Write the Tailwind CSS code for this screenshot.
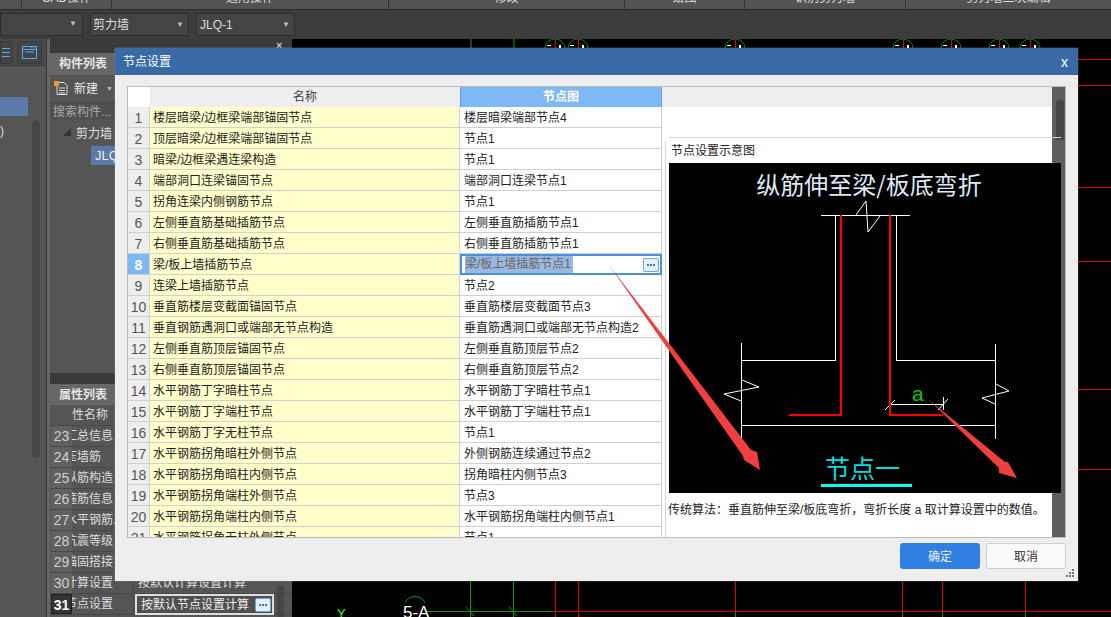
<!DOCTYPE html>
<html lang="zh-CN">
<head>
<meta charset="utf-8">
<title>节点设置</title>
<script src="https://cdn.jsdelivr.net/npm/@tailwindcss/browser@4"></script>
</head>
<body class="bg-black font-['Liberation_Sans','Noto_Sans_CJK_SC',sans-serif] text-xs">
<div class="relative w-[1111px] h-[617px] overflow-hidden flex flex-col">

  <!-- ribbon group labels -->
  <div class="h-[10px] shrink-0 flex bg-[#535353] border-b border-[#2b2b2b] text-[#ddd] overflow-hidden">
    <div class="w-[22px] border-r border-[#333]"></div>
    <div class="w-[90px] border-r border-[#333] text-center -mt-[10px]">CAD操作</div>
    <div class="w-[277px] border-r border-[#333] text-center -mt-[10px]">通用操作</div>
    <div class="w-[236px] border-r border-[#333] text-center -mt-[10px]">修改</div>
    <div class="w-[120px] border-r border-[#333] text-center -mt-[10px]">绘图</div>
    <div class="w-[161px] border-r border-[#333] text-center -mt-[10px]">识别剪力墙</div>
    <div class="flex-1 text-center -mt-[10px]">剪力墙二次编辑</div>
  </div>

  <!-- selector bar -->
  <div class="h-[29px] shrink-0 bg-[#3c3c3c] flex items-start gap-[7px] pt-[3px]">
    <div class="w-[83px] h-[23px] bg-[#444] border border-[#2e2e2e] flex items-center justify-end pr-[5px]"><span class="text-[#bbb] text-[8px]">▼</span></div>
    <div class="w-[99px] h-[23px] bg-[#444] border border-[#2e2e2e] flex items-center justify-between pl-[2px] pr-[4px] pt-[1px] text-[#ddd]"><span>剪力墙</span><span class="text-[#bbb] text-[8px]">▼</span></div>
    <div class="w-[99px] h-[23px] bg-[#444] border border-[#2e2e2e] flex items-center justify-between pl-[3px] pr-[4px] pt-[1px] text-[#ddd]"><span>JLQ-1</span><span class="text-[#bbb] text-[8px]">▼</span></div>
  </div>

  <div class="flex-1 flex min-h-0">
    <!-- left rail -->
    <div class="w-[46px] shrink-0 bg-[#555] flex flex-col">
      <div class="h-[27px] bg-[#4a4a4a] border-b border-[#3c3c3c] flex items-center justify-between pr-[4px]">
        <div class="w-[13px] h-[23px] bg-[#444] rounded-r-[3px] border border-[#3a3a3a] flex flex-col justify-center gap-[3px] pl-[1px]">
          <span class="block w-[8px] h-px bg-[#5aa7f0]"></span><span class="block w-[8px] h-px bg-[#5aa7f0]"></span><span class="block w-[8px] h-px bg-[#5aa7f0]"></span>
        </div>
        <div class="w-[25px] h-[23px] bg-[#444] rounded-[3px] border border-[#3a3a3a] flex items-center justify-center">
          <svg width="15" height="13" viewBox="0 0 15 13" fill="none" stroke="#5aa7f0"><rect x=".5" y=".5" width="14" height="12"/><path d="M.5 3.500h14M3 6h9M9 1.800h1M11 1.800h1"/></svg>
        </div>
      </div>
      <div class="relative flex-1">
        <div class="mt-[31px] w-[28px] h-[19px] bg-[#5a7aa8]"></div>
        <div class="text-[#ddd] mt-[7px] h-[16px] leading-[16px]">)</div>
        <div class="absolute left-[32px] top-[54px] w-[8px] h-[337px] rounded-[4px] bg-[#464646]"></div>
      </div>
    </div>
    <div class="w-[4px] shrink-0 bg-[#666] border-l border-[#3a3a3a]"></div>

    <!-- component + property panels -->
    <div class="w-[242px] shrink-0 flex flex-col bg-[#555]">
      <div class="h-[14px] bg-[#3a3a3a] flex justify-end items-center pr-[10px] text-[#ccc] text-[10px] font-bold">×</div>
      <div class="h-[22px] bg-[#666] text-[#e4e4e4] font-bold pl-[9px] leading-[22px]">构件列表</div>
      <div class="h-[28px] flex items-center pl-[4px] text-[#e8e8e8] border-b border-[#484848]">
        <svg width="15" height="15" viewBox="0 0 15 15" fill="none" class="mr-[5px]"><path d="M3 1.500h7l3 3v9H3z" stroke="#ddd"/><path d="M5 7h6M5 9.500h6M5 12h6" stroke="#ddd"/><rect x="0" y="0" width="5" height="5" fill="#e89a3c"/></svg>
        <span>新建</span><span class="text-[#bbb] text-[7px] ml-[8px]">▼</span>
      </div>
      <div class="h-[17px] bg-[#505050] text-[#a8a8a8] pl-[3px] leading-[19px]">搜索构件...</div>
      <div class="h-[26px] flex items-center pl-[13px] pt-[1px] text-[#e0e0e0]"><span class="text-[#333] text-[8px] mr-[5px]">◢</span>剪力墙</div>
      <div class="ml-[41px] w-[60px] h-[19px] bg-[#5a7aa8] text-[#eee] pl-[4px] leading-[19px] text-[13px]">JLQ-1</div>
      <div class="h-[208px]"></div>
      <div class="h-[11px] bg-[#3a3a3a]"></div>
      <div class="h-[21px] bg-[#666] text-[#e4e4e4] font-bold pl-[9px] leading-[22px]">属性列表</div>
      <div id="props" class="flex-1 relative"></div>
    </div>
    <div class="flex-1 min-w-0">
      <svg class="block w-full h-full" viewBox="292 39 819 578" fill="none">
        <path d="M471 39v9" stroke="#666"/>
        <path d="M514 39v9" stroke="#0a0"/>
        <g id="bubbles"></g>
        <path d="M1078 59.500h33M1078 85.500h33M1078 187.500h33M1078 261.500h33M1078 389.500h33M1078 469.500h33" stroke="#d00"/>
        <path d="M735.500 581v31M902.500 581v31M942.500 581v31M1025.500 581v31M555.500 581v36M578.500 581v36" stroke="#d00"/>
        <path d="M735.500 612v5M902.500 612v5M942.500 612v5M1025.500 612v5M470.500 581v36M513.500 581v36" stroke="#090"/>
        <path d="M427 611.500h128" stroke="#090"/>
        <path d="M555 611.500h556" stroke="#d00"/>
        <path d="M466 607l8 9M509 607l8 9" stroke="#090"/>
        <path d="M405 603a11 11 0 0 1 20 0" stroke="#090"/>
        <text x="403" y="618" fill="#fff" font-size="17" font-family="Liberation Sans">5-A</text>
        <text x="337" y="618" fill="#3f3" font-size="13" font-family="Liberation Sans">Y</text>
      </svg>
    </div>
  </div>

  <!-- 节点设置 dialog -->
  <div class="absolute left-[115px] top-[48px] w-[963px] h-[533px] bg-[#eee] flex flex-col shadow-[0_0_1px_#aab]">
    <div class="h-[27px] shrink-0 bg-[#3a6aa5] text-white flex items-center justify-between pl-[8px] pr-[10px]">
      <span>节点设置</span><span class="text-sm leading-none">x</span>
    </div>
    <div class="flex-1 min-h-0 flex flex-col pl-[12px] pr-[12px] pt-[11px]">
      <div class="relative h-[452px] border border-[#bbb] flex bg-white overflow-hidden">
        <div class="w-[534px] shrink-0 overflow-hidden">
          <div class="flex h-[20px]">
            <div class="w-[22px] bg-white"></div>
            <div class="w-[310px] bg-[#eee] text-[#444] text-center leading-[21px]">名称</div>
            <div class="w-[202px] bg-[#7fb8f7] text-white font-bold text-center leading-[21px] border-x border-[#5f9fe6]">节点图</div>
          </div>
          <div id="rows"></div>
        </div>
        <div class="flex-1 flex flex-col">
          <div class="h-[20px] bg-[#eee]"></div>
          <div class="flex-1"></div>
        </div>
        <div class="w-[13px] shrink-0 bg-[#5e5e5e] relative">
          <div class="absolute left-[4px] top-[13px] w-[8px] h-[40px] rounded-t-[4px] bg-[#454545]"></div>
        </div>

        <!-- schematic sits over the right pane and its scrollbar -->
        <div class="absolute left-[537px] top-[50px] w-[396px] bottom-0 flex flex-col">
          <div class="ml-[4px] h-px bg-[#d4d4d4]"></div>
          <div class="mt-[3px] flex-1 border-l border-[#d4d4d4] pl-[3px] flex flex-col">
            <div class="h-[22px] text-[#222] pl-[2px] leading-[21px]">节点设置示意图</div>
            <svg width="392" height="330" viewBox="669 163 392 330" class="block shrink-0 bg-black" fill="none">
              <text x="869" y="194" text-anchor="middle" fill="#dfe9f5" font-size="24" font-family="Noto Sans CJK SC">纵筋伸至梁/板底弯折</text>
              <g stroke="#fff">
                <path d="M821 215.500h89M835.500 215v145.500M896.500 215v145.500"/>
                <path d="M856 215l10-14 2 31 12-16"/>
                <path d="M741.500 343v96M995.500 344v95M741 360.500h95M896 360.500h100M741 425.500h255"/>
                <path d="M742 380l17 7-35 7 17 7M996 384l13 7-27 7 13 6"/>
                <path d="M890 404.500h53M885 410l10-10M943.500 397v13M938 410l10-11"/>
              </g>
              <path d="M841 215v200h-52M890 215v200h53" stroke="#f00" stroke-width="2"/>
              <text x="912" y="401" fill="#0c0" font-size="21" font-family="Liberation Sans">a</text>
              <text x="825" y="478" fill="#0dd" font-size="25" font-family="Noto Sans CJK SC">节点一</text>
              <path d="M821 485.500h91" stroke="#0ff" stroke-width="3"/>
            </svg>
            <div class="-ml-[1px] h-[43px] pt-[9px] text-[#222] leading-[16px] whitespace-nowrap">传统算法：垂直筋伸至梁/板底弯折，弯折长度 a 取计算设置中的数值。</div>
          </div>
        </div>
      </div>
      <div class="flex justify-end gap-[6px] mt-[5px]">
        <button class="w-[80px] h-[26px] rounded-[3px] bg-[#2f80e2] text-[#e8f0fa] pt-[2px]">确定</button>
        <button class="w-[80px] h-[26px] rounded-[3px] bg-[#fafafa] border border-[#c6cfdf] text-[#333] pt-[2px]">取消</button>
      </div>
    </div>
    <svg class="absolute right-[3px] bottom-[3px]" width="9" height="9" viewBox="0 0 9 9" fill="#777"><path d="M6 0h2v2H6zM3 3h2v2H3zM6 3h2v2H6zM0 6h2v2H0zM3 6h2v2H3zM6 6h2v2H6z"/></svg>
  </div>

  <!-- red annotation arrows drawn on top of the screenshot -->
  <svg class="absolute inset-0 pointer-events-none" width="1111" height="617" viewBox="0 0 1111 617">
    <polygon points="609,265 751,450 757,452 760,470 744,460 743,456" fill="#ef3f3f"/>
    <polygon points="928,399 1005,462 1008,462 1017,478 999,473 999,468" fill="#ef3f3f"/>
  </svg>
</div>

<script>
  const rows = [
    ["楼层暗梁/边框梁端部锚固节点", "楼层暗梁端部节点4"],
    ["顶层暗梁/边框梁端部锚固节点", "节点1"],
    ["暗梁/边框梁遇连梁构造", "节点1"],
    ["端部洞口连梁锚固节点", "端部洞口连梁节点1"],
    ["拐角连梁内侧钢筋节点", "节点1"],
    ["左侧垂直筋基础插筋节点", "左侧垂直筋插筋节点1"],
    ["右侧垂直筋基础插筋节点", "右侧垂直筋插筋节点1"],
    ["梁/板上墙插筋节点", "梁/板上墙插筋节点1"],
    ["连梁上墙插筋节点", "节点2"],
    ["垂直筋楼层变截面锚固节点", "垂直筋楼层变截面节点3"],
    ["垂直钢筋遇洞口或端部无节点构造", "垂直筋遇洞口或端部无节点构造2"],
    ["左侧垂直筋顶层锚固节点", "左侧垂直筋顶层节点2"],
    ["右侧垂直筋顶层锚固节点", "右侧垂直筋顶层节点2"],
    ["水平钢筋丁字暗柱节点", "水平钢筋丁字暗柱节点1"],
    ["水平钢筋丁字端柱节点", "水平钢筋丁字端柱节点1"],
    ["水平钢筋丁字无柱节点", "节点1"],
    ["水平钢筋拐角暗柱外侧节点", "外侧钢筋连续通过节点2"],
    ["水平钢筋拐角暗柱内侧节点", "拐角暗柱内侧节点3"],
    ["水平钢筋拐角端柱外侧节点", "节点3"],
    ["水平钢筋拐角端柱内侧节点", "水平钢筋拐角端柱内侧节点1"],
    ["水平钢筋拐角无柱外侧节点", "节点1"]
  ];
  const dots = '<span class="w-[16px] h-[14px] rounded-[2px] bg-[#e6f0fb] border border-[#6aa5e8] flex items-center justify-center gap-px"><i class="block w-[2px] h-[2px] bg-[#3a78c0]"></i><i class="block w-[2px] h-[2px] bg-[#3a78c0]"></i><i class="block w-[2px] h-[2px] bg-[#3a78c0]"></i></span>';

  document.getElementById("rows").innerHTML = rows.map((r, i) => {
    const active = i === 7;
    const num = active ? "bg-[#7fb8f7] text-white font-bold" : "bg-[#eee] text-[#555]";
    const value = active
      ? `<div class="w-[202px] h-[21px] border-2 border-[#4a90e0] flex items-center justify-between pl-[3px] pr-[1px]"><span class="bg-[#9ab8e0] text-[#666] leading-[17px] pr-[2px]">${r[1]}</span>${dots}</div>`
      : `<div class="w-[202px] h-[21px] border-b border-r border-[#d0d0d0] pl-[4px] pt-px leading-[20px] text-[#222]">${r[1]}</div>`;
    return `<div class="flex">
      <div class="w-[22px] h-[21px] border-b border-r border-[#d0d0d0] text-center text-sm pt-px leading-[20px] ${num}">${i + 1}</div>
      <div class="w-[310px] h-[21px] border-b border-r border-[#d0d0d0] bg-[#ffffcc] pl-[3px] pt-px leading-[20px] text-[#222]">${r[0]}</div>
      ${value}
    </div>`;
  }).join("");

  // 名称 column is scrolled a few pixels, so labels start left of the cell
  const props = [
    ["", "属性名称", ""],
    ["23", "汇总信息", ""],
    ["24", "压墙筋", ""],
    ["25", "纵筋构造", ""],
    ["26", "箍筋信息", ""],
    ["27", "水平钢筋.", ""],
    ["28", "抗震等级", ""],
    ["29", "锚固搭接", ""],
    ["30", "计算设置", "按默认计算设置计算"],
    ["31", "节点设置", "按默认节点设置计算"]
  ];
  document.getElementById("props").innerHTML = props.map((p, i) => {
    const last = i === props.length - 1;
    const num = last ? "bg-[#333] border border-[#222] text-white font-bold" : (i === 0 ? "bg-[#555]" : "bg-[#616161] text-[#d0d0d0]");
    const val = last
      ? `<div class="ml-[1px] w-[139px] h-[21px] border-2 border-[#ddd] bg-[#505050] text-[#eee] flex items-center justify-between pl-[4px] pr-[1px]"><span>${p[2]}</span>${dots}</div>`
      : `<div class="flex-1 pl-[4px] leading-[20px] text-[#ddd]">${p[2]}</div>`;
    const indent = i === 0 ? "-ml-[12px]" : "-ml-[7px]";
    return `<div class="flex h-[21px] border-b border-[#484848]">
      <div class="w-[21px] shrink-0 ml-[1px] text-center text-sm leading-[20px] ${num}">${p[0]}</div>
      <div class="w-[62px] shrink-0 overflow-hidden whitespace-nowrap leading-[20px] text-[#ddd] border-r border-[#484848]"><div class="${indent}">${p[1]}</div></div>
      ${val}
    </div>`;
  }).join("") + '<div class="absolute left-[227px] top-[180px] w-[7px] h-[40px] rounded-[3px] bg-[#464646]"></div>';

  document.getElementById("bubbles").innerHTML = [555, 578, 735, 903, 951, 999, 1030].map(x =>
    `<path d="M${x - 10} 48a10 9 0 0 1 20 0" stroke="#080"/><path d="M${x + .5} 39v9" stroke="#d00"/><path d="M${x - 8} 45h4v1h-4zM${x + 4} 45h2v3h-2z" fill="#fff"/>`
  ).join("");
</script>
</body>
</html>
